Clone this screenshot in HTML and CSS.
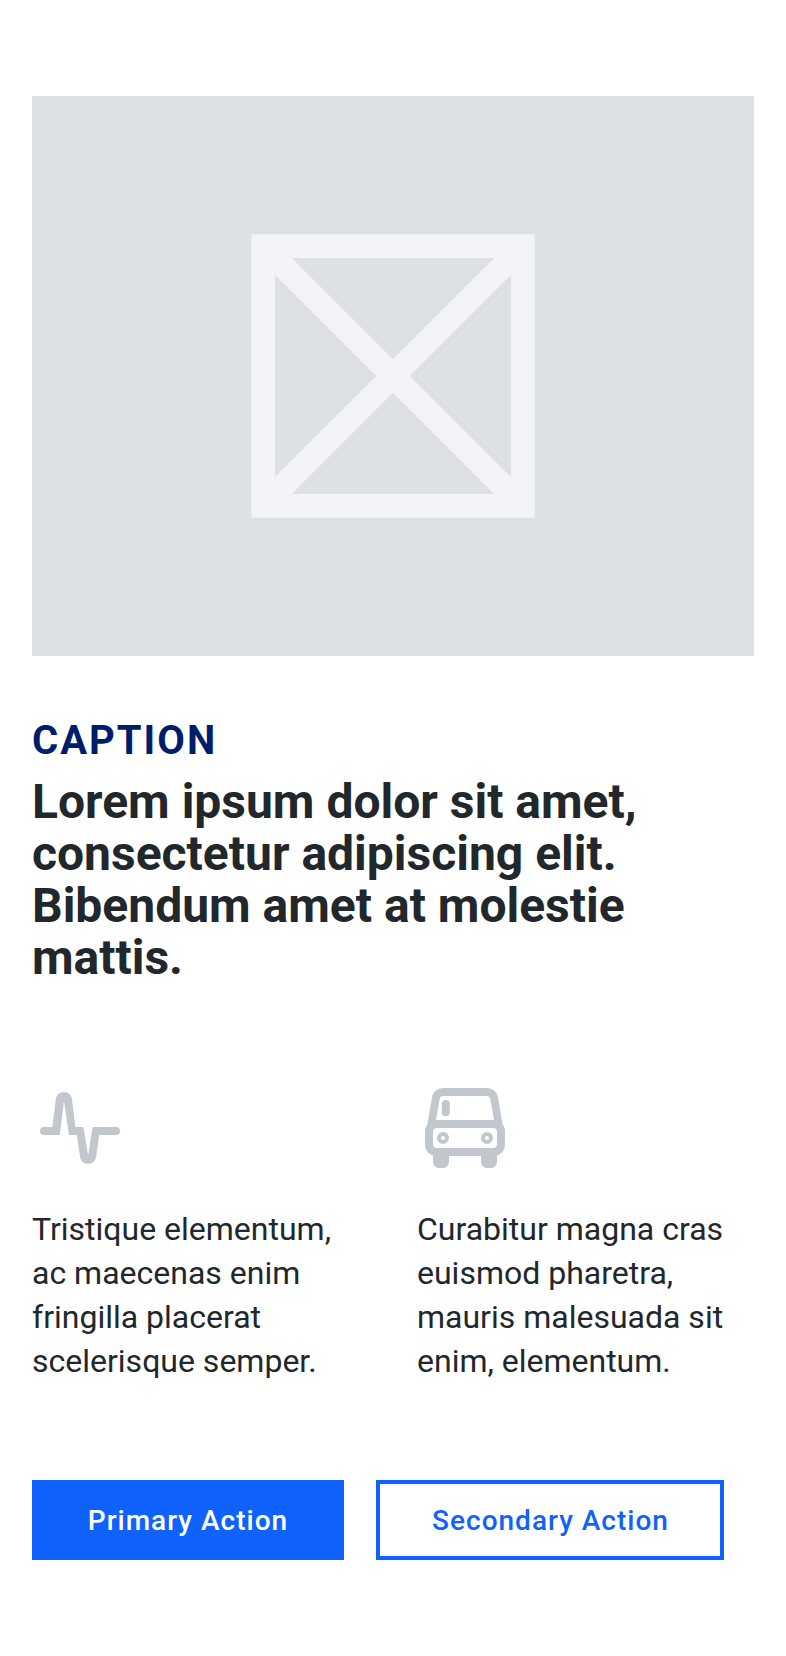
FILE: index.html
```html
<!DOCTYPE html>
<html lang="en">
<head>
<meta charset="utf-8">
<title>Feature</title>
<link rel="stylesheet" href="styles.css">
</head>
<body>
<main class="page">
  <div class="media">
    <svg class="media-icon" viewBox="0 0 24 24" fill="none" stroke="currentColor" stroke-width="1.667">
      <path d="M2.833 2.833H21.167V21.167H2.833ZM2.833 2.833L21.167 21.167M21.167 2.833L2.833 21.167"/>
    </svg>
  </div>
  <p class="caption">CAPTION</p>
  <h1 class="title">Lorem ipsum dolor sit amet,<br>consectetur adipiscing elit.<br>Bibendum amet at molestie<br>mattis.</h1>
  <div class="features">
    <section class="feature">
      <svg class="icon" viewBox="0 0 96 96" fill="currentColor">
        <path d="M12 47H20.4L23.8 19.4C24.3 15 27.6 12 32 12S39.5 15 40 19.4L43.4 47H51.4L56.1 75.4L60.6 47H84A4 4 0 0 1 84 55H67.2L64.1 76.6C63.5 81 60.4 84 56 84S48.5 81 48 76.6L44.8 55H36.9L32 20.8L27.8 55H12A4 4 0 0 1 12 47Z"/>
      </svg>
      <p class="text">Tristique elementum,<br>ac maecenas enim<br>fringilla placerat<br>scelerisque semper.</p>
    </section>
    <section class="feature">
      <svg class="icon" viewBox="0 0 96 96" fill="currentColor">
        <path fill-rule="evenodd" d="M26.5 8H69.5C75.5 8 80.2 12 81 17.5L85.6 44.5Q88 47 88 50.5V64C88 69.5 85 74 80 75.5V82A6 6 0 0 1 74 88H70A6 6 0 0 1 64 82V76H32V82A6 6 0 0 1 26 88H22A6 6 0 0 1 16 82V75.5C11 74 8 69.5 8 64V50.5Q8 47 10.4 44.5L15 17.5C15.8 12 20.5 8 26.5 8ZM26.5 16A4 4 0 0 0 22.6 19.4L19 40H77L73.4 19.4A4 4 0 0 0 69.5 16ZM20 48A4 4 0 0 0 16 52V64A4 4 0 0 0 20 68H76A4 4 0 0 0 80 64V52A4 4 0 0 0 76 48Z"/>
        <rect x="24.8" y="20" width="8" height="16.3" rx="4"/>
        <g fill="none" stroke="currentColor" stroke-width="4">
          <circle cx="26" cy="58" r="4"/>
          <circle cx="70" cy="58" r="4"/>
        </g>
      </svg>
      <p class="text">Curabitur magna cras<br>euismod pharetra,<br>mauris malesuada sit<br>enim, elementum.</p>
    </section>
  </div>
  <div class="actions">
    <button class="button primary">Primary Action</button>
    <button class="button secondary">Secondary Action</button>
  </div>
</main>
</body>
</html>
```

FILE: styles.css
```css
* { box-sizing: border-box; }

body {
  margin: 0;
  background: #fff;
  color: #21272a;
  font-family: Roboto, "Liberation Sans", sans-serif;
}

.page {
  min-height: 1656px;
  padding: 96px 32px;
}

.media {
  display: flex;
  align-items: center;
  justify-content: center;
  height: 560px;
  background: #dde1e6;
}

.media-icon {
  width: 340px;
  height: 340px;
  color: #f2f4f8;
}

.caption {
  margin: 57px 0 0;
  color: #001d6c;
  font-size: 40px;
  font-weight: 700;
  line-height: 56px;
  letter-spacing: 2px;
}

.title {
  margin: 7px 0 0;
  font-size: 48px;
  font-weight: 700;
  line-height: 52px;
}

.features {
  display: grid;
  grid-template-columns: 1fr 1fr;
  gap: 48px;
  margin-top: 96px;
}

.icon {
  display: block;
  width: 96px;
  height: 96px;
  color: #c1c7cd;
}

.text {
  margin: 31px 0 0;
  font-size: 32px;
  line-height: 44px;
  white-space: nowrap;
}

.actions {
  display: flex;
  gap: 32px;
  margin-top: 97px;
}

.button {
  height: 80px;
  padding: 2px 0 0;
  border: 4px solid #0f62fe;
  border-radius: 0;
  font: 500 28px/28px Roboto, "Liberation Sans", sans-serif;
  letter-spacing: 1px;
}

.primary {
  width: 312px;
  background: #0f62fe;
  color: #fff;
}

.secondary {
  width: 348px;
  padding-left: 1px;
  background: #fff;
  color: #0f62fe;
}
```
